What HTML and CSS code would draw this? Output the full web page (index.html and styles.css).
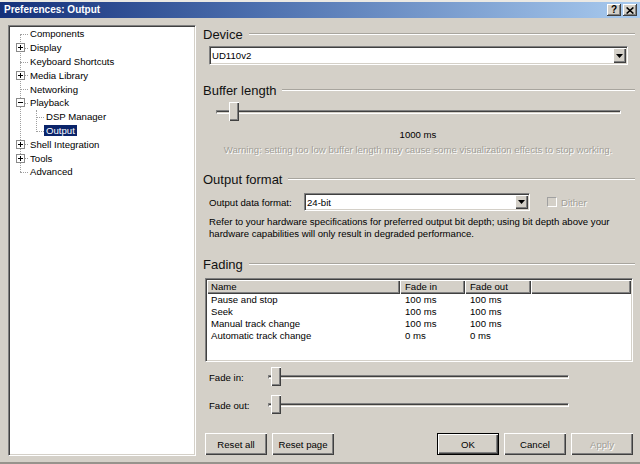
FILE: index.html
```html
<!DOCTYPE html>
<html>
<head>
<meta charset="utf-8">
<title>Preferences: Output</title>
<link rel="stylesheet" href="styles.css">
</head>
<body>
<div class="window">
  <div class="titlebar">
    <span class="title">Preferences: Output</span>
    <div class="caption-buttons">
      <span class="cap-btn">?</span>
      <span class="cap-btn"><svg width="8" height="7" viewBox="0 0 8 7"><path d="M0.6 0.5L7.4 6.5M7.4 0.5L0.6 6.5" stroke="#000" stroke-width="1.6"/></svg></span>
    </div>
  </div>
  <div class="content">
    <div class="tree">
      <ul class="tree-root">
        <li><div class="row"><span class="label">Components</span></div></li>
        <li><div class="row"><svg class="expander" width="9" height="9" viewBox="0 0 9 9"><rect x="0.5" y="0.5" width="8" height="8" fill="#fff" stroke="#8a8a8a"/><path d="M2 4.5h5M4.5 2v5" stroke="#000"/></svg><span class="label">Display</span></div></li>
        <li><div class="row"><span class="label">Keyboard Shortcuts</span></div></li>
        <li><div class="row"><svg class="expander" width="9" height="9" viewBox="0 0 9 9"><rect x="0.5" y="0.5" width="8" height="8" fill="#fff" stroke="#8a8a8a"/><path d="M2 4.5h5M4.5 2v5" stroke="#000"/></svg><span class="label">Media Library</span></div></li>
        <li><div class="row"><span class="label">Networking</span></div></li>
        <li>
          <div class="row"><svg class="expander" width="9" height="9" viewBox="0 0 9 9"><rect x="0.5" y="0.5" width="8" height="8" fill="#fff" stroke="#8a8a8a"/><path d="M2 4.5h5" stroke="#000"/></svg><span class="label">Playback</span></div>
          <ul class="tree-children">
            <li><div class="row"><span class="label">DSP Manager</span></div></li>
            <li><div class="row"><span class="label selected">Output</span></div></li>
          </ul>
        </li>
        <li><div class="row"><svg class="expander" width="9" height="9" viewBox="0 0 9 9"><rect x="0.5" y="0.5" width="8" height="8" fill="#fff" stroke="#8a8a8a"/><path d="M2 4.5h5M4.5 2v5" stroke="#000"/></svg><span class="label">Shell Integration</span></div></li>
        <li><div class="row"><svg class="expander" width="9" height="9" viewBox="0 0 9 9"><rect x="0.5" y="0.5" width="8" height="8" fill="#fff" stroke="#8a8a8a"/><path d="M2 4.5h5M4.5 2v5" stroke="#000"/></svg><span class="label">Tools</span></div></li>
        <li><div class="row"><span class="label">Advanced</span></div></li>
      </ul>
    </div>

    <div class="page">
      <div class="group-title title-device">Device</div>
      <div class="combo combo-device">
        <span class="combo-text">UD110v2</span>
        <span class="combo-btn"><svg width="7" height="4" viewBox="0 0 7 4"><path d="M0 0h7L3.5 4z"/></svg></span>
      </div>

      <div class="group-title title-buffer">Buffer length</div>
      <div class="slider slider-buffer">
        <div class="track"></div>
        <div class="thumb" style="left:13px"></div>
      </div>
      <div class="buffer-value">1000 ms</div>
      <div class="warning">Warning: setting too low buffer length may cause some visualization effects to stop working.</div>

      <div class="group-title title-format">Output format</div>
      <div class="format-row">
        <span class="format-label">Output data format:</span>
        <div class="combo combo-format">
          <span class="combo-text">24-bit</span>
          <span class="combo-btn"><svg width="7" height="4" viewBox="0 0 7 4"><path d="M0 0h7L3.5 4z"/></svg></span>
        </div>
        <span class="check disabled"><span class="check-box"></span>Dither</span>
      </div>
      <p class="format-note">Refer to your hardware specifications for preferred output bit depth; using bit depth above your hardware capabilities will only result in degraded performance.</p>

      <div class="group-title title-fading">Fading</div>
      <div class="list">
        <div class="list-header">
          <span class="hcell col-name">Name</span>
          <span class="hcell col-in">Fade in</span>
          <span class="hcell col-out">Fade out</span>
          <span class="hcell col-fill"></span>
        </div>
        <div class="list-row"><span class="col-name">Pause and stop</span><span class="col-in">100 ms</span><span class="col-out">100 ms</span></div>
        <div class="list-row"><span class="col-name">Seek</span><span class="col-in">100 ms</span><span class="col-out">100 ms</span></div>
        <div class="list-row"><span class="col-name">Manual track change</span><span class="col-in">100 ms</span><span class="col-out">100 ms</span></div>
        <div class="list-row"><span class="col-name">Automatic track change</span><span class="col-in">0 ms</span><span class="col-out">0 ms</span></div>
      </div>

      <div class="fade-row fade-in">
        <span class="fade-label">Fade in:</span>
        <div class="slider slider-fade">
          <div class="track"></div>
          <div class="thumb" style="left:3px"></div>
        </div>
      </div>
      <div class="fade-row fade-out">
        <span class="fade-label">Fade out:</span>
        <div class="slider slider-fade">
          <div class="track"></div>
          <div class="thumb" style="left:3px"></div>
        </div>
      </div>

      <div class="button-row">
        <div class="btn-group">
          <span class="btn">Reset all</span>
          <span class="btn">Reset page</span>
        </div>
        <div class="btn-group btn-group-right">
          <span class="btn btn-default">OK</span>
          <span class="btn">Cancel</span>
          <span class="btn btn-disabled">Apply</span>
        </div>
      </div>
    </div>
  </div>
</div>
</body>
</html>
```

FILE: styles.css
```css
* { box-sizing: border-box; }
html, body { margin: 0; padding: 0; }
body {
  width: 640px;
  height: 464px;
  overflow: hidden;
  background: #d4d0c8;
  font-family: "Liberation Sans", Arial, sans-serif;
  font-size: 9.6px;
  color: #000;
}
.window {
  width: 640px;
  height: 464px;
  display: flex;
  flex-direction: column;
  background: #d4d0c8;
  border-top: 2px solid #ebe9e4;
  border-bottom: 2px solid #96938c;
}

/* title bar */
.titlebar {
  height: 16px;
  flex: none;
  display: flex;
  align-items: center;
  justify-content: space-between;
  padding: 0 3px 0 4px;
  background: linear-gradient(to right, #15307a, #4c6fae 40%, #a9cbef);
}
.title {
  color: #fff;
  font-weight: bold;
  font-size: 10px;
  line-height: 16px;
}
.caption-buttons { display: flex; gap: 2px; }
.cap-btn {
  width: 14px;
  height: 12px;
  display: flex;
  align-items: center;
  justify-content: center;
  background: #d4d0c8;
  box-shadow: inset -1px -1px #404040, inset 1px 1px #fff, inset -2px -2px #808080;
  font-weight: bold;
  font-size: 10px;
  line-height: 12px;
}

/* content */
.content {
  flex: 1;
  display: flex;
  padding: 7px 0 6px 8px;
}

/* tree */
.tree {
  width: 188px;
  height: 431px;
  flex: none;
  background: #fff;
  border: 1px solid;
  border-color: #808080 #fff #fff #808080;
  box-shadow: inset 1px 1px #404040, inset -1px -1px #d4d0c8;
  padding: 1px;
}
.tree ul { list-style: none; margin: 0; padding: 0; position: relative; }
.tree-root::before {
  content: "";
  position: absolute;
  left: 10px;
  top: 7px;
  bottom: 7px;
  border-left: 1px dotted #a0a0a0;
}
.tree-children::before {
  content: "";
  position: absolute;
  left: 26px;
  top: 0;
  bottom: 7px;
  border-left: 1px dotted #a0a0a0;
}
.row {
  position: relative;
  height: 13.8px;
  display: flex;
  align-items: center;
  padding-left: 18px;
}
.row::before {
  content: "";
  position: absolute;
  left: 10px;
  top: 7px;
  width: 8px;
  border-top: 1px dotted #a0a0a0;
}
.tree-children .row { padding-left: 34px; }
.tree-children .row::before { left: 26px; }
.label {
  padding: 0 2px;
  line-height: 11px;
  white-space: nowrap;
}
.label.selected { background: #0a246a; color: #fff; }
.expander {
  position: absolute;
  left: 6px;
  top: 2.4px;
  z-index: 1;
}

/* right page */
.page {
  flex: 1;
  display: flex;
  flex-direction: column;
}
.group-title {
  display: flex;
  align-items: center;
  height: 16px;
  padding: 0 5px 0 7px;
  font-size: 13px;
  color: #111;
  white-space: nowrap;
}
.group-title::after {
  content: "";
  flex: 1;
  margin-left: 6px;
  border-top: 1px solid #a8a59e;
  border-bottom: 1px solid #fff;
}
.title-device { margin-top: 1px; }
.title-buffer { margin-top: 17px; }
.title-format { margin-top: 15px; }
.title-fading { margin-top: 17px; }

/* combo box */
.combo {
  display: flex;
  background: #fff;
  border: 1px solid;
  border-color: #808080 #fff #fff #808080;
  box-shadow: inset 1px 1px #404040, inset -1px -1px #d4d0c8;
  padding: 1px;
}
.combo-text {
  flex: 1;
  padding-left: 1px;
  display: flex;
  align-items: center;
}
.combo-btn {
  width: 13px;
  display: flex;
  align-items: center;
  justify-content: center;
  background: #d4d0c8;
  box-shadow: inset 1px 1px #fff, inset -1px -1px #404040, inset -2px -2px #808080;
}
.combo-device {
  height: 19px;
  margin: 4px 12px 0 13px;
}
.combo-format {
  width: 226px;
  height: 18px;
}

/* sliders */
.slider {
  position: relative;
  height: 22px;
  display: flex;
  align-items: center;
}
.track {
  flex: 1;
  height: 4px;
  border: 1px solid;
  border-color: #808080 #fff #fff #808080;
  background: #d4d0c8;
  box-shadow: inset 0 1px #404040;
}
.thumb {
  position: absolute;
  top: 1px;
  width: 10px;
  height: 19px;
  background: #d4d0c8;
  box-shadow: inset 1px 1px #fff, inset -1px -1px #404040, inset -2px -2px #808080;
}
.slider-buffer { margin: 3px 19px 0 20px; }
.buffer-value {
  margin-top: 6px;
  line-height: 12px;
  text-align: center;
}
.warning {
  margin-top: 3px;
  line-height: 12px;
  text-align: center;
  color: #a19e97;
  text-shadow: 1px 1px 0 #fff;
}

/* output format */
.format-row {
  margin-top: 6px;
  height: 18px;
  padding-left: 13px;
  display: flex;
  align-items: center;
}
.format-label { width: 95px; }
.check {
  margin-left: 17px;
  display: flex;
  align-items: center;
  gap: 4px;
}
.check.disabled { color: #a19e97; text-shadow: 1px 1px 0 #fff; }
.check-box {
  width: 10px;
  height: 10px;
  background: #d4d0c8;
  border: 1px solid;
  border-color: #a0a0a0 #fff #fff #a0a0a0;
}
.format-note {
  margin: 5px 8px 0 13px;
  line-height: 11.5px;
}

/* list view */
.list {
  margin: 6px 7px 0 9px;
  height: 84px;
  background: #fff;
  border: 1px solid;
  border-color: #808080 #fff #fff #808080;
  box-shadow: inset 1px 1px #404040, inset -1px -1px #d4d0c8;
  padding: 1px;
}
.list-header {
  display: flex;
  height: 14px;
  background: #d4d0c8;
}
.hcell {
  height: 14px;
  line-height: 14px;
  white-space: nowrap;
  box-shadow: inset 1px 1px #fff, inset -1px -1px #404040, inset -2px -2px #808080;
}
.col-name { width: 193px; padding-left: 4px; }
.col-in { width: 65px; padding-left: 5px; }
.col-out { width: 66px; padding-left: 5px; }
.col-fill { flex: 1; }
.list-row {
  display: flex;
  height: 12px;
  line-height: 12px;
  white-space: nowrap;
}

/* fade sliders */
.fade-row {
  height: 22px;
  padding-left: 13px;
  display: flex;
  align-items: center;
}
.fade-in { margin-top: 4px; }
.fade-out { margin-top: 6px; }
.fade-label { width: 59px; }
.slider-fade { width: 301px; }

/* buttons */
.button-row {
  margin-top: 17px;
  padding: 0 7px 0 9px;
  display: flex;
  justify-content: space-between;
}
.btn-group { display: flex; gap: 5px; }
.btn {
  width: 62px;
  height: 22px;
  display: flex;
  align-items: center;
  justify-content: center;
  background: #d4d0c8;
  box-shadow: inset 1px 1px #fff, inset -1px -1px #404040, inset -2px -2px #808080;
}
.btn-default {
  box-shadow: inset 0 0 0 1px #000, inset 2px 2px #fff, inset -2px -2px #404040, inset -3px -3px #808080;
}
.btn-disabled { color: #a19e97; text-shadow: 1px 1px 0 #fff; }
```
